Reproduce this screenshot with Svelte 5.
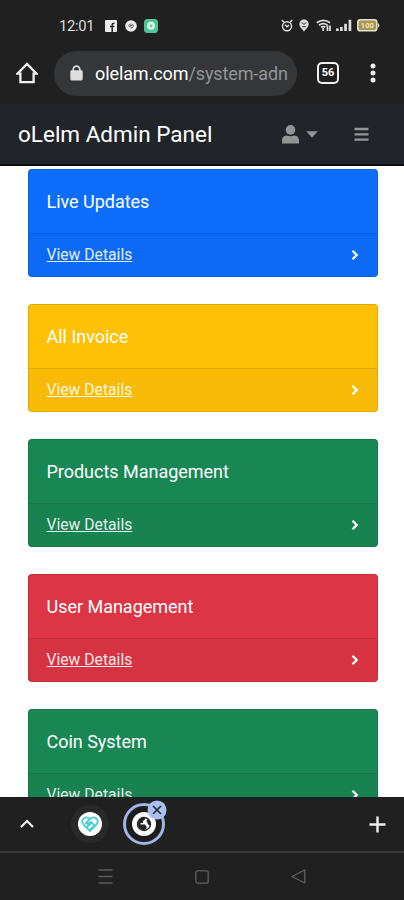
<script>
	let tabCount = 56;
	let cards = [
		{ title: 'Live Updates', color: 'primary' },
		{ title: 'All Invoice', color: 'warning' },
		{ title: 'Products Management', color: 'success' },
		{ title: 'User Management', color: 'danger' },
		{ title: 'Coin System', color: 'success' }
	];
</script>

<div class="phone">
	<header class="chrome">
		<div class="status">
			<span class="time">12:01</span>
			<svg class="fb" width="12" height="12" viewBox="0 0 12 12">
				<rect width="12" height="12" rx="1" fill="#eee" />
				<path d="M7.2 12V4.8q0-1.7 2.3-1.6M5 6.4h4.4" fill="none" stroke="#222" stroke-width="1.5" />
			</svg>
			<svg class="chat" width="12" height="12" viewBox="0 0 12 12">
				<circle cx="6" cy="6" r="5.8" fill="#eee" />
				<path d="M3.4 5.2q2.6-2.6 5.2 0 0 2-2.4 3.2V7Q3.4 7 3.4 5.2zM4.5 5.5h3" fill="none" stroke="#666" stroke-width=".8" />
			</svg>
			<svg width="14" height="14" viewBox="0 0 14 14">
				<rect width="14" height="14" rx="3.5" fill="#4fc596" />
				<circle cx="7" cy="6.8" r="4" fill="#d8faec" />
				<circle cx="7" cy="6.8" r="1.5" fill="#70cba8" />
			</svg>
			<div class="signals">
				<svg width="12" height="13" viewBox="0 0 12 13" fill="none" stroke="#ddd" stroke-width="1.5">
					<circle cx="6" cy="7.2" r="4.5" />
					<path d="M.7 1.2 3 3M11.3 1.2 9 3M4 5.7l2 2 2-1.5" />
				</svg>
				<svg class="pin" width="10" height="13" viewBox="0 0 10 13">
					<path d="M5 12.6 1.2 8C-1 4.2 1.5.5 5 .5S11 4.2 8.8 8z" fill="#ddd" />
					<path d="m2.8 3.6 2.2 1.8 2.2-1.8M3.2 7.6h3.6" fill="none" stroke="#333" />
				</svg>
				<svg class="wifi" width="16" height="13" viewBox="0 0 16 13" fill="none" stroke="#ddd" stroke-width="1.8">
					<path d="M.8 3.8Q7.2-1.2 14 3.8M3 6.2q4.2-3 8.5 0M5.1 8.3q2.2-1.5 4.3 0M7.2 9v3M11.5 6.5V12M14 12V6.5" />
				</svg>
				<svg class="bars" width="16" height="13" viewBox="0 0 16 13" fill="#ddd">
					<path d="M0 9.5h2.7V12H0zM4 8h2.7v4H4zM8.2 4.8h2.7V12H8.2zM12.6.7h2.7V12h-2.7z" />
				</svg>
				<svg class="battery" width="23" height="13" viewBox="0 0 23 13">
					<rect x=".8" y=".8" width="19" height="11" rx="2.6" fill="#a99650" stroke="#e4e1d2" stroke-width="1.6" />
					<path d="M21 4.2q1.3 0 1.3 2.2T21 8.6z" fill="#e4e1d2" />
					<text x="10.3" y="9" text-anchor="middle" font-size="7.5" font-weight="700" fill="#f0e7bf">100</text>
				</svg>
			</div>
		</div>
		<div class="toolbar">
			<svg class="home" width="22" height="22" viewBox="0 0 22 22" fill="none" stroke="#eee" stroke-width="2.3">
				<path d="M1.5 11.7h2.9v8.5h13.2v-8.5h2.9L11 2z" />
			</svg>
			<div class="address">
				<svg width="13" height="16" viewBox="0 0 13 16">
					<path d="M3.2 7V4.4a3.3 3.3 0 0 1 6.6 0V7" fill="none" stroke="#ddd" stroke-width="1.7" />
					<rect x=".3" y="5.3" width="12.4" height="10.2" rx="1.4" fill="#ddd" />
				</svg>
				<div class="url">olelam.com<span>/system-adn</span></div>
			</div>
			<div class="tabs">{tabCount}</div>
			<svg class="dots" width="6" height="20" viewBox="0 0 6 20" fill="#eee">
				<circle cx="3" cy="3" r="2.5" /><circle cx="3" cy="10" r="2.5" /><circle cx="3" cy="17" r="2.5" />
			</svg>
		</div>
	</header>

	<nav class="navbar">
		<h1>oLelm Admin Panel</h1>
		<svg class="user" width="17" height="20" viewBox="0 0 17 20" fill="#929496">
			<circle cx="8.5" cy="5.9" r="4.8" />
			<path d="M0 19.5v-3.1Q0 11.9 4.6 11.5q3.9 1.5 7.8 0 4.6.4 4.6 4.9v3.1z" />
		</svg>
		<svg class="caret" width="12" height="7" viewBox="0 0 12 7" fill="#929496"><path d="M.3.3h11.4L6 6.7z" /></svg>
		<svg class="menu" width="15" height="14" viewBox="0 0 15 14" stroke="#929496" stroke-width="2.3">
			<path d="M.5 2h14M.5 7.3h14M.5 12.6h14" />
		</svg>
	</nav>

	<main>
		{#each cards as card}
			<section class="card {card.color}">
				<div class="title">{card.title}</div>
				<div class="details">
					<span class="link">View Details</span>
					<svg width="8" height="12" viewBox="0 0 8 12" fill="none" stroke="#fff" stroke-width="2.3">
						<path d="m1.5 1.8 4.2 4.2-4.2 4.2" />
					</svg>
				</div>
			</section>
		{/each}
	</main>

	<div class="groups">
		<svg class="up" width="14" height="10" viewBox="0 0 14 10" fill="none" stroke="#eee" stroke-width="2.2">
			<path d="m1 8 6-6 6 6" />
		</svg>
		<div class="tab">
			<svg width="24" height="24" viewBox="0 0 24 24">
				<circle cx="12" cy="12" r="12" fill="#fff" />
				<path d="M12 19 5.5 12.5C2 8 7.5 3 12 7c4.5-4 10 1 6.5 5.5zM12 7l-4 4q2 2 5-1l4 4M9 15l4-4M12 18l4-4" fill="none" stroke="#45cfcf" stroke-width="1.8" />
			</svg>
		</div>
		<div class="tab active">
			<svg width="24" height="24" viewBox="0 0 24 24">
				<circle cx="12" cy="12" r="12" fill="#fff" />
				<circle cx="12" cy="12" r="6.5" fill="#fff" stroke="#222" stroke-width="1.4" />
				<path d="M5.5 11.5 8 7q2-2 5-1.5v2L11 9v2H8.5v1.5H13l1.5 2v2L12.5 18q-5.5.5-7-6.5zM14.5 8.5l2-1.5q2.5 3 1.8 6.5L16 12.5z" fill="#222" />
			</svg>
			<svg class="close" width="20" height="20" viewBox="0 0 20 20">
				<circle cx="10" cy="10" r="9.5" fill="#a9c0f1" />
				<path d="m6 6 8 8m0-8-8 8" stroke="#222936" stroke-width="1.7" />
			</svg>
		</div>
		<svg class="plus" width="17" height="17" viewBox="0 0 17 17" stroke="#eee" stroke-width="2.4">
			<path d="M8.5.5v16M.5 8.5h16" />
		</svg>
	</div>

	<footer>
		<svg width="15" height="15" viewBox="0 0 15 15" stroke="#5c5c5c" stroke-width="1.3"><path d="M.5 1h14M.5 7.5h14M.5 14h14" /></svg>
		<svg width="14" height="14" viewBox="0 0 14 14" fill="none" stroke="#606060" stroke-width="1.3"><rect x=".8" y=".8" width="12.4" height="12.4" rx="2" /></svg>
		<svg width="15" height="15" viewBox="0 0 15 15" fill="none" stroke="#606060" stroke-width="1.3" stroke-linejoin="round"><path d="M13.8 1v13L1 7.5z" /></svg>
	</footer>
</div>

<style>
	:global(body) {
		margin: 0;
		overflow: hidden;
	}
	.phone {
		width: 404px;
		height: 900px;
		display: flex;
		flex-direction: column;
		overflow: hidden;
		background: #fff;
		font-family: Roboto, sans-serif;
		color: #fff;
	}
	svg {
		display: block;
		flex: none;
	}
	.chrome {
		height: 104px;
		flex: none;
		background: #202020;
	}
	.status {
		height: 51px;
		display: flex;
		align-items: center;
		padding-left: 59px;
	}
	.time {
		width: 46px;
		font-size: 14.8px;
		line-height: 16px;
		padding-top: 1px;
		letter-spacing: -.3px;
		color: #ddd;
	}
	.chat {
		margin: 0 7px 0 8px;
	}
	.signals {
		margin-left: auto;
		padding-right: 24px;
		display: flex;
	}
	.pin {
		margin: 0 7px 0 6px;
	}
	.bars {
		margin: 0 5px 0 4px;
	}
	.toolbar {
		height: 44px;
		display: flex;
		align-items: center;
	}
	.home {
		margin: 0 16px;
	}
	.address {
		width: 243px;
		height: 45px;
		box-sizing: border-box;
		padding-left: 16px;
		display: flex;
		align-items: center;
		border-radius: 23px;
		background: #343638;
	}
	.url {
		margin-left: 12px;
		white-space: nowrap;
		font-size: 18px;
		letter-spacing: -.1px;
	}
	.url span {
		color: #929597;
	}
	.tabs {
		width: 22px;
		height: 22px;
		box-sizing: border-box;
		margin-left: 20px;
		border: 2.5px solid #eee;
		border-radius: 5px;
		font-size: 11px;
		font-weight: 700;
		line-height: 18px;
		text-align: center;
	}
	.dots {
		margin-left: 31px;
	}
	.navbar {
		height: 60px;
		flex: none;
		display: flex;
		align-items: center;
		padding-left: 18px;
		background: #212529;
		border-bottom: 2px solid #090b0d;
	}
	h1 {
		width: 264px;
		margin: 0;
		font-size: 22.5px;
		font-weight: 400;
	}
	.caret {
		margin: 0 36px 0 7px;
	}
	main {
		height: 628px;
		flex: none;
		padding: 3px 26px 0 28px;
		overflow: hidden;
	}
	.card {
		height: 108px;
		box-sizing: border-box;
		margin-bottom: 27px;
		border: 1px solid rgba(0, 0, 0, .12);
		border-radius: 4px;
	}
	.title {
		height: 63px;
		line-height: 63px;
		padding-left: 17.5px;
		font-size: 18px;
		letter-spacing: -.02px;
	}
	.details {
		height: 42px;
		box-sizing: border-box;
		display: flex;
		align-items: center;
		justify-content: space-between;
		padding: 0 18px 0 17.5px;
		border-top: 1px solid rgba(0, 0, 0, .08);
		background: rgba(0, 0, 0, .03);
	}
	.link {
		font-size: 15.7px;
		color: rgba(255, 255, 255, .9);
		text-decoration: underline;
	}
	.primary {
		background: #0d6efd;
	}
	.warning {
		background: #ffc107;
	}
	.success {
		background: #198754;
	}
	.danger {
		background: #dc3545;
	}
	.groups {
		height: 54px;
		flex: none;
		display: flex;
		align-items: center;
		background: #202020;
	}
	.up {
		margin: 0 30px 0 20px;
	}
	.tab {
		position: relative;
		width: 38px;
		height: 38px;
		margin-left: 7px;
		display: flex;
		align-items: center;
		justify-content: center;
		border-radius: 50%;
		background: #292929;
	}
	.active {
		width: 36px;
		height: 36px;
		margin-left: 14px;
		border: 3px solid #9fb5e5;
		background: #1c1c1c;
	}
	.close {
		position: absolute;
		top: -6px;
		right: -5px;
	}
	.plus {
		margin-left: auto;
		margin-right: 18px;
	}
	footer {
		flex: 1;
		display: flex;
		justify-content: center;
		align-items: center;
		gap: 82px;
		border-top: 2px solid #373737;
		background: #202020;
	}
</style>
